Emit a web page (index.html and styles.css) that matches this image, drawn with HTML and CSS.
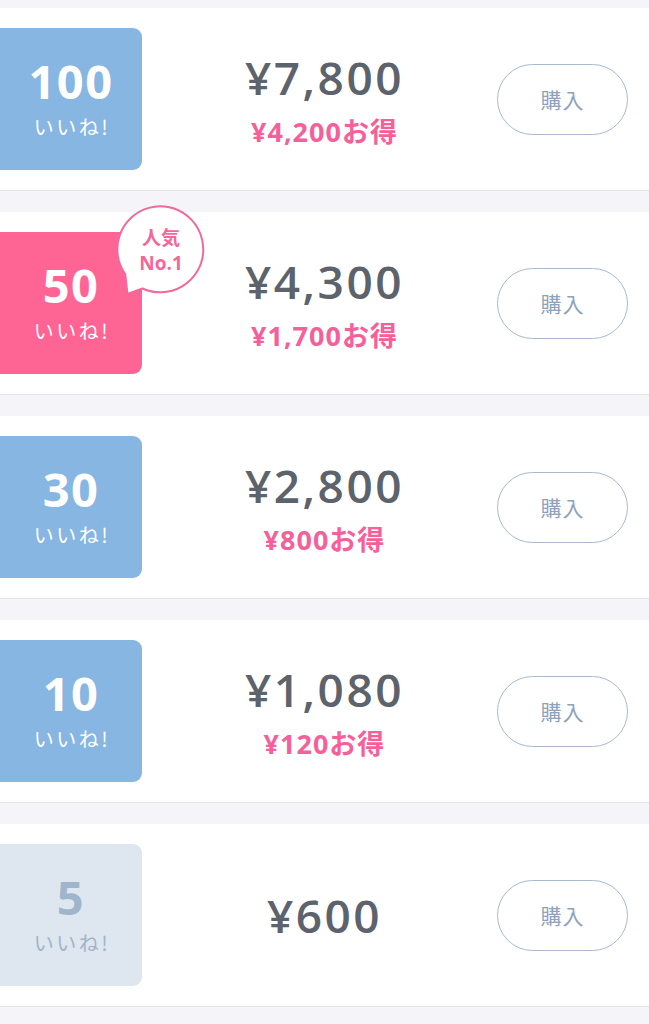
FILE: index.html
```html
<!DOCTYPE html>
<html lang="ja">
<head>
<meta charset="utf-8">
<title>いいね!購入</title>
<link rel="stylesheet" href="styles.css">
</head>
<body>
<main class="list">
  <section class="item">
    <div class="badge badge--blue"><span class="count">100</span><span class="unit">いいね!</span></div>
    <div class="price"><p class="amount">¥7,800</p><p class="save">¥4,200お得</p></div>
    <button class="buy">購入</button>
  </section>
  <section class="item">
    <div class="badge badge--pink"><span class="count">50</span><span class="unit">いいね!</span>
      <div class="bubble">
        <svg class="bubble-shape" width="92" height="94" viewBox="0 0 92 94"><path d="M27.5 83.5 A43 43 0 1 0 10.2 69.2 L12.5 89 Z" fill="#fff" stroke="#f3679a" stroke-width="2" stroke-linejoin="round"/></svg>
        <span class="bubble-text">人気<br>No.1</span>
      </div>
    </div>
    <div class="price"><p class="amount">¥4,300</p><p class="save">¥1,700お得</p></div>
    <button class="buy">購入</button>
  </section>
  <section class="item">
    <div class="badge badge--blue"><span class="count">30</span><span class="unit">いいね!</span></div>
    <div class="price"><p class="amount">¥2,800</p><p class="save">¥800お得</p></div>
    <button class="buy">購入</button>
  </section>
  <section class="item">
    <div class="badge badge--blue"><span class="count">10</span><span class="unit">いいね!</span></div>
    <div class="price"><p class="amount">¥1,080</p><p class="save">¥120お得</p></div>
    <button class="buy">購入</button>
  </section>
  <section class="item">
    <div class="badge badge--pale"><span class="count">5</span><span class="unit">いいね!</span></div>
    <div class="price"><p class="amount">¥600</p></div>
    <button class="buy">購入</button>
  </section>
</main>
</body>
</html>
```

FILE: styles.css
```css
html, body {
  margin: 0;
  padding: 0;
  background: #f5f5f9;
  font-family: "Open Sans", "Noto Sans CJK JP", sans-serif;
}

.list {
  display: flex;
  flex-direction: column;
  gap: 21px;
  padding-top: 8px;
}

.item {
  display: flex;
  align-items: center;
  box-sizing: border-box;
  height: 183px;
  padding: 20px 21px 20px 0;
  background: #fff;
  border-bottom: 1px solid #e4e6ec;
}

.badge {
  position: relative;
  flex: 0 0 142px;
  height: 142px;
  border-radius: 0 9px 9px 0;
  display: flex;
  flex-direction: column;
  align-items: center;
  justify-content: center;
  color: #fff;
}

.badge--blue { background: #86b6e1; }
.badge--pink { background: #fe6594; }
.badge--pale { background: #dee6f0; color: #9fb5cc; }

.count {
  font-weight: 700;
  font-size: 47px;
  line-height: 46px;
  letter-spacing: 1.5px;
}

.unit {
  font-family: "Noto Sans CJK JP", sans-serif;
  font-size: 20px;
  line-height: 26px;
  letter-spacing: 2.5px;
  margin-top: 10px;
  margin-left: 2px;
}

.bubble {
  position: absolute;
  left: 115px;
  top: -27px;
  width: 92px;
  height: 94px;
}

.bubble-shape {
  position: absolute;
  left: 0;
  top: 0;
}

.bubble-text {
  position: absolute;
  left: 3px;
  top: 3px;
  width: 86px;
  height: 86px;
  display: flex;
  align-items: center;
  justify-content: center;
  text-align: center;
  color: #f3679a;
  font-family: "Open Sans", "Noto Sans CJK JP", sans-serif;
  font-weight: 700;
  font-size: 19px;
  line-height: 25px;
}

.price {
  flex: 1;
  padding-left: 10px;
  display: flex;
  flex-direction: column;
  align-items: center;
  justify-content: center;
}

.price p { margin: 0; }

.amount {
  font-weight: 600;
  font-size: 46px;
  line-height: 52px;
  letter-spacing: 2.5px;
  color: #5d636c;
}

.price .save {
  margin-top: 14px;
  font-family: "Open Sans", "Noto Sans CJK JP", sans-serif;
  font-weight: 700;
  font-size: 27px;
  line-height: 30px;
  letter-spacing: 1px;
  color: #f5609a;
}

.buy {
  flex: 0 0 131px;
  height: 71px;
  border-radius: 36px;
  border: 1.5px solid #a8bacd;
  background: #fff;
  color: #8ea3bb;
  font-family: "Noto Sans CJK JP", sans-serif;
  font-size: 21px;
  font-weight: 400;
  letter-spacing: 1px;
  padding: 0;
}
```
